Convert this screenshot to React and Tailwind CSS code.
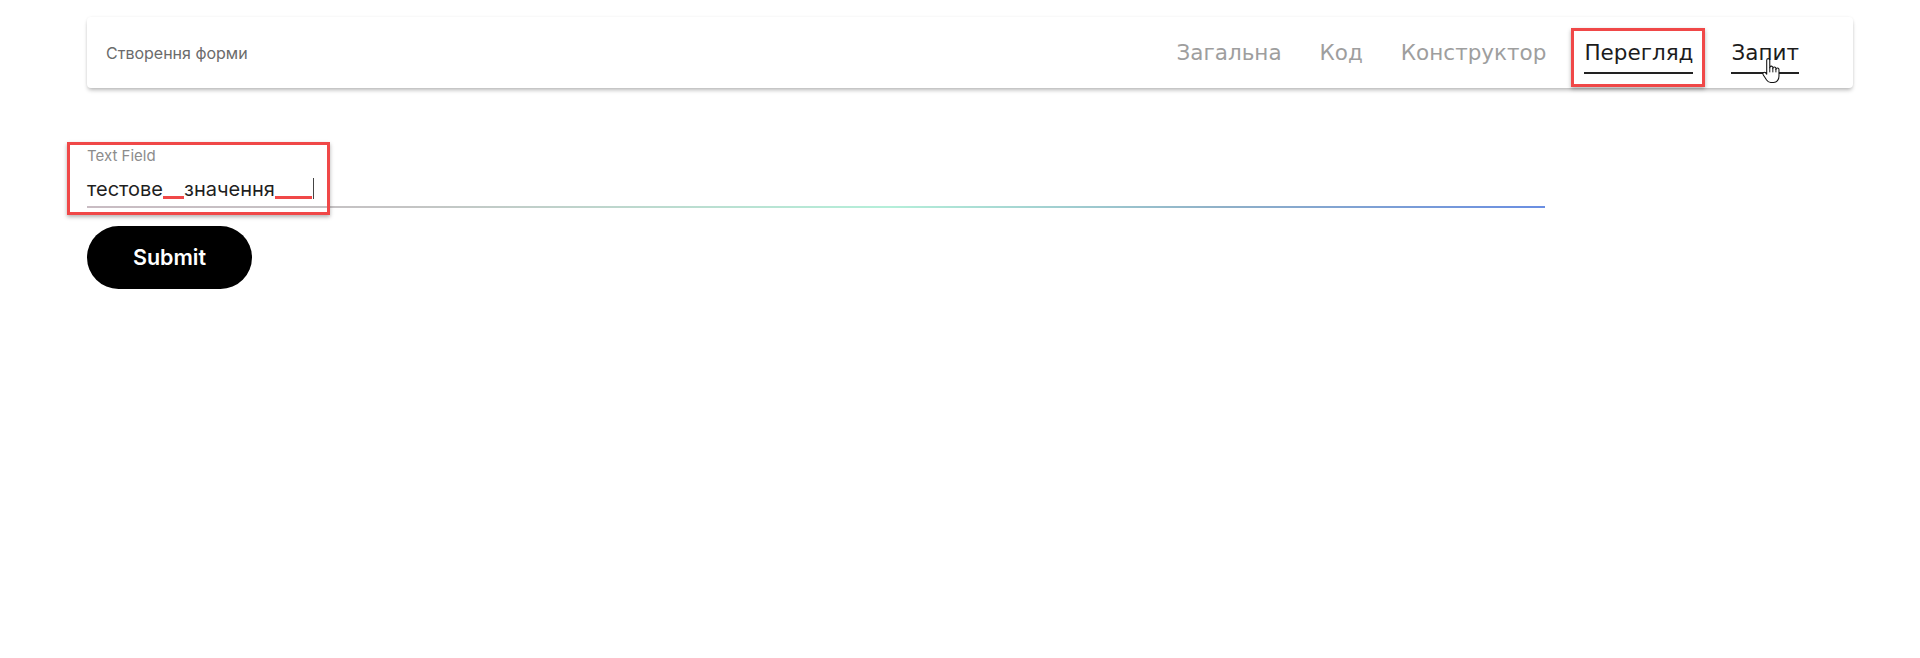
import { useState } from 'react';

const tabs = ['Загальна', 'Код', 'Конструктор', 'Перегляд', 'Запит'];

function HandCursor() {
  return (
    <svg width="23" height="32" viewBox="0 0 24 29" className="absolute left-[29px] top-[24px] pointer-events-none">
      <path
        d="M7 3.2a1.6 1.6 0 0 1 3.2 0V11a1.6 1.6 0 0 1 3.2 0v1a1.6 1.6 0 0 1 3.2 0v1a1.6 1.6 0 0 1 3.2 0V20c0 3.4-2.2 6.5-5.6 6.5h-3c-2 0-3.2-1-4.3-2.6L3.3 18.4a1.6 1.6 0 0 1 2.4-2.1L7 17.8Z"
        fill="#fff"
        stroke="#111"
        strokeWidth="1.1"
        strokeLinejoin="round"
      />
      <path d="M10.2 11v4.5M13.4 12v3.5M16.6 13v2.5" stroke="#111" strokeWidth="1" strokeLinecap="round" />
    </svg>
  );
}

export default function App() {
  const [active] = useState('Перегляд');

  return (
    <div className="min-h-screen bg-white pl-[87px] pr-[67px] pt-[17px] font-['Inter',sans-serif]">
      {/* Header */}
      <header className="h-[71px] bg-white rounded-[4px] shadow-[0_3px_4px_-1px_rgba(0,0,0,0.28),0_0_3px_rgba(0,0,0,0.06)] flex items-center justify-between pl-[19px] pr-[54px]">
        <h1 className="text-[16px] text-[#6b6b6b]">Створення форми</h1>
        <nav className="flex items-center gap-[38px] font-['DejaVu_Sans',sans-serif]">
          {tabs.map((tab) => {
            const isActive = tab === active;
            const isHover = tab === 'Запит';
            return (
              <div key={tab} className="relative">
                <span
                  className={`block text-[21.5px] leading-[28px] pt-[8px] pb-[5px] border-b-2 ${
                    isActive || isHover ? 'text-[#1c1c1c] border-[#222]' : 'text-[#9e9e9e] border-transparent'
                  }`}
                >
                  {tab}
                </span>
                {isActive && (
                  <span className="absolute left-[-13px] right-[-12px] top-[-3px] bottom-[-13px] border-[3px] border-[#f04848] shadow-[0_2px_4px_rgba(0,0,0,0.3)] pointer-events-none" />
                )}
                {isHover && <HandCursor />}
              </div>
            );
          })}
        </nav>
      </header>

      {/* Form */}
      <form className="mt-[60px] w-[1458px]" onSubmit={(e) => e.preventDefault()}>
        <div className="relative">
          <label className="block text-[15px] leading-[16px] text-[#8c8c8c]">Text Field</label>
          <div className="mt-[11px] text-[20px] leading-[28px] text-[#1f1f1f]">
            тестове
            <span className="inline-block w-[21px] h-[3px] bg-[#f04848] translate-y-[3px]" />
            значення
            <span className="inline-block w-[37px] h-[3px] bg-[#f04848] translate-y-[3px]" />
            <span className="inline-block w-[1.5px] h-[21px] bg-[#444] ml-[1px] translate-y-[3px]" />
          </div>
          <div className="mt-[3px] h-[2px] bg-[linear-gradient(90deg,#c9bcc3_0%,#c4c4c4_22%,#b4efd9_55%,#8fb0c8_78%,#6a8ee2_100%)]" />
          <span className="absolute left-[-20px] top-[-6px] w-[263px] h-[73px] border-[3px] border-[#f04848] shadow-[0_2px_4px_rgba(0,0,0,0.3)] pointer-events-none" />
        </div>
        <button
          type="submit"
          className="mt-[18px] w-[165px] h-[63px] rounded-full bg-black text-white text-[21.5px] font-semibold"
        >
          Submit
        </button>
      </form>
    </div>
  );
}
